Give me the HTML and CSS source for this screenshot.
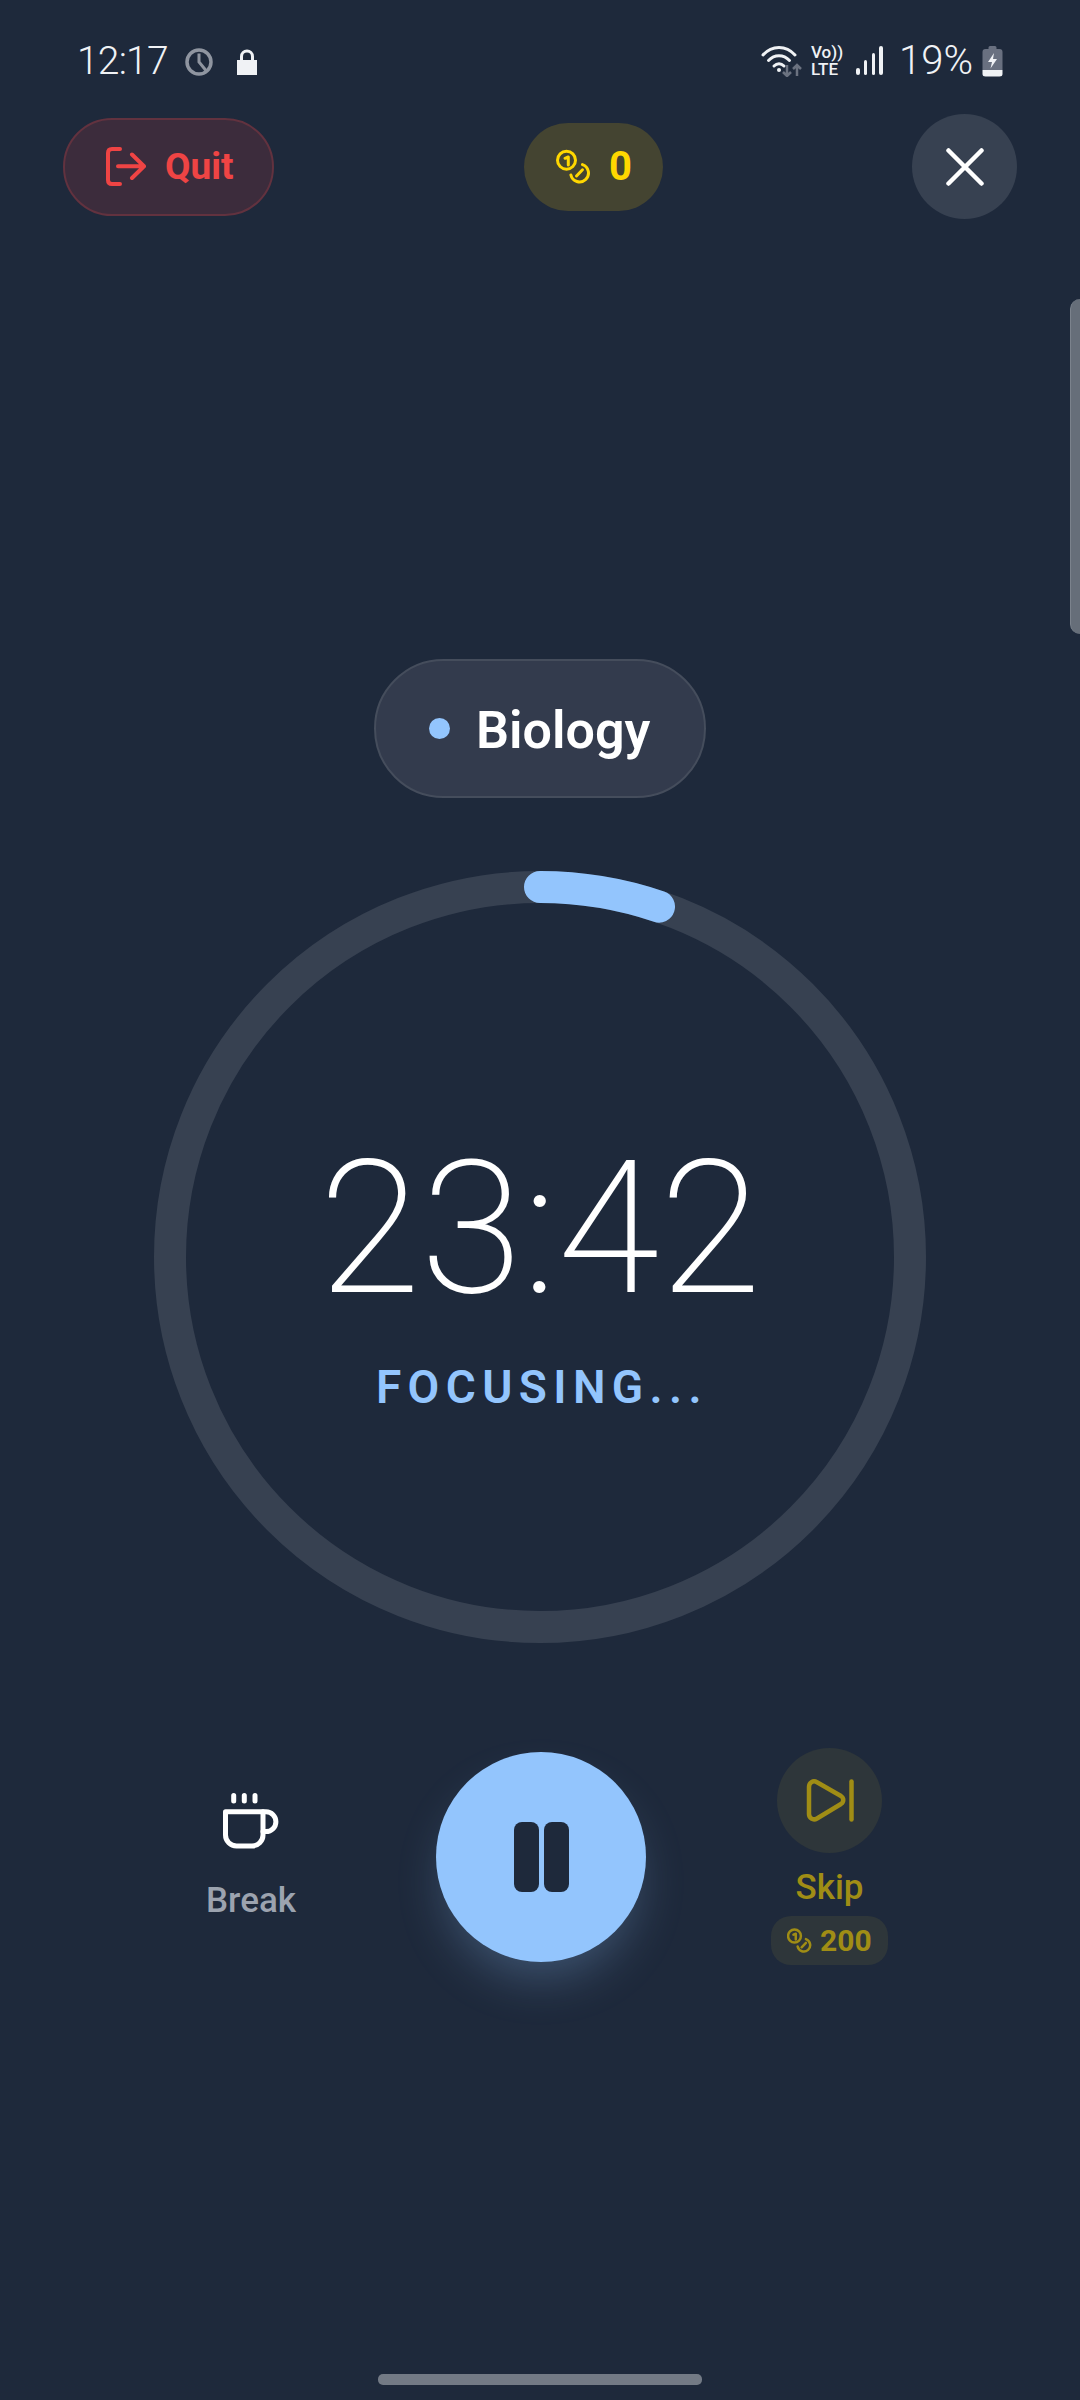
FILE: index.html
```html
<!DOCTYPE html>
<html lang="en">
<head>
<meta charset="utf-8">
<title>Focus timer</title>
<link rel="stylesheet" href="styles.css">
</head>
<body>
<div class="screen">
  <div class="status">
    <span class="clock">12:17</span>
    <svg class="alarm" viewBox="0 0 28 28"><circle cx="14" cy="14" r="12" /><path d="M14 5.5V14L21 22.5"/></svg>
    <svg class="lock" viewBox="0 0 22 26"><rect x="1" y="11" width="20" height="15"/><path d="M5.5 12V7.5a5.5 5.5 0 0 1 11 0V12"/></svg>
    <div class="status-right">
      <svg class="wifi" viewBox="0 0 42 32">
        <path class="w" d="M2 10C11 0 25 0 34 10"/>
        <path class="w" d="M7.5 15.5C13.5 9 22.5 9 28.5 15.5"/>
        <path class="w" d="M13 21C16 18 20 18 23 21"/>
        <circle class="wd" cx="18" cy="25" r="2"/>
        <path class="wa" d="M26 20V31M22 27L26 31L30 27"/>
        <path class="wa" d="M36 31V20M32 24L36 20L40 24"/>
      </svg>
      <div class="volte"><span class="vo">Vo))</span><span class="lte">LTE</span></div>
      <div class="signal"><i class="b1"></i><i class="b2"></i><i class="b3"></i><i class="b4"></i></div>
      <span class="batt-text">19%</span>
      <svg class="battery" viewBox="0 0 20 32"><path class="bb" d="M6 2.5Q6 1 7.5 1H12.5Q14 1 14 2.5V4H17Q20 4 20 7V25H0V7Q0 4 3 4H6Z"/><path class="bl" d="M0 25H20V29Q20 31.500 17 31.500H3Q0 31.500 0 29Z"/><path class="bl" d="M11.500 8L5.500 17H9.500L8 23.500L14.500 14H10.500Z"/></svg>
    </div>
  </div>

  <div class="header">
    <button class="quit">
      <svg class="quit-icon" viewBox="0 0 40 39"><path d="M14 2H6Q2 2 2 6V33Q2 37 6 37H14"/><path d="M12 19.300H38M26 7.500L38 19.300L26 31"/></svg>
      <span>Quit</span>
    </button>
    <div class="coins">
      <svg class="coin-icon" viewBox="0 0 35 35"><circle cx="10.500" cy="11.200" r="9"/><path d="M9 9.300L12.300 8V16"/><path d="M26.500 15.600A8.900 8.900 0 1 1 14.900 26"/><path d="M20.500 27L26.500 20.800"/></svg>
      <span>0</span>
    </div>
    <button class="close" aria-label="Close">
      <svg viewBox="0 0 38 38"><path d="M2.500 2.500L35.500 35.500M35.500 2.500L2.500 35.500"/></svg>
    </button>
  </div>

  <div class="subject"><span class="dot"></span><span class="subject-name">Biology</span></div>

  <div class="ring-wrap">
    <svg class="ring" viewBox="0 0 772 772">
      <circle class="track" cx="386" cy="386" r="370"/>
      <path class="arc" d="M386 16A370 370 0 0 1 505 35.600"/>
    </svg>
    <div class="time-block">
      <div class="time">23:42</div>
      <div class="state">FOCUSING...</div>
    </div>
  </div>

  <div class="controls">
    <div class="col col-break">
      <svg class="cup" viewBox="0 0 56 56"><path d="M10.700 2.500V8M21.300 2.500V8M32 2.500V8"/><path d="M2.500 18.800H40V42A11 11 0 0 1 29 53H13.500A11 11 0 0 1 2.500 42Z"/><path d="M40 18.800H43A9.900 9.900 0 0 1 43 38.600H40"/></svg>
      <span class="break-label">Break</span>
    </div>
    <button class="pause" aria-label="Pause"><i></i><i></i></button>
    <div class="col col-skip">
      <div class="skip-circle">
        <svg viewBox="0 0 48 43"><path d="M3 8C3 3.500 7 1 11 3.200L35 17C38 19 38 23 35 25L11 39.500C7 41.800 3 39 3 35Z"/><path d="M45.500 2.500V40.500"/></svg>
      </div>
      <span class="skip-label">Skip</span>
      <div class="cost">
        <svg class="cost-icon" viewBox="0 0 35 35"><circle cx="10.500" cy="11.200" r="9"/><path d="M9 9.300L12.300 8V16"/><path d="M26.500 15.600A8.900 8.900 0 1 1 14.900 26"/><path d="M20.500 27L26.500 20.800"/></svg>
        <span>200</span>
      </div>
    </div>
  </div>

  <div class="scrollbar"></div>
  <div class="home"></div>
</div>
</body>
</html>
```
FILE: styles.css
```css
* { box-sizing: border-box; }
html, body { margin: 0; padding: 0; }
body { background: #1e293b; font-family: Roboto, "Liberation Sans", sans-serif; }
button { border: 0; padding: 0; font: inherit; }
svg { display: block; fill: none; }

.screen { position: relative; width: 1080px; height: 2400px; overflow: hidden; background: #1e293b; display: flex; flex-direction: column; align-items: center; }

.status { width: 100%; height: 114px; padding: 41px 77px 0 77px; display: flex; align-items: flex-start; color: #f0f2f5; }
.clock { font-size: 39px; font-weight: 300; line-height: 40px; letter-spacing: -0.8px; width: 90px; white-space: nowrap; }
.alarm { width: 28px; height: 28px; margin: 7px 0 0 18px; }
.alarm circle { stroke: #8f95a0; stroke-width: 3.5; }
.alarm path { stroke: #8f95a0; stroke-width: 3; }
.lock { width: 22px; height: 26px; margin: 8px 0 0 23px; }
.lock rect { fill: #f0f2f5; }
.lock path { stroke: #f0f2f5; stroke-width: 3; }
.status-right { margin-left: auto; display: flex; align-items: flex-start; }
.wifi { width: 42px; height: 32px; margin-top: 4px; }
.w { stroke: #f0f2f5; stroke-width: 3; stroke-linecap: round; }
.wd { fill: #f0f2f5; }
.wa { stroke: #6b7280; stroke-width: 2.500; }
.volte { width: 31px; margin: 3px 0 0 8px; display: flex; flex-direction: column; color: #f0f2f5; font-weight: 500; }
.vo { font-size: 17px; line-height: 17px; white-space: nowrap; }
.lte { font-size: 17px; line-height: 17px; }
.signal { width: 27px; height: 29px; margin: 5px 0 0 14px; display: flex; align-items: flex-end; justify-content: space-between; }
.signal i { display: block; width: 3.500px; background: #f0f2f5; border-radius: 2px; }
.b1 { height: 7px; }
.b2 { height: 15px; }
.b3 { height: 22px; }
.b4 { height: 29px; }
.batt-text { margin-left: 16px; font-size: 40px; font-weight: 300; line-height: 40px; width: 83px; white-space: nowrap; }
.battery { width: 21px; height: 32px; margin-top: 4px; }
.bb { fill: #697080; }
.bl { fill: #f0f2f5; }

.header { width: 100%; height: 105px; display: flex; align-items: center; padding: 0 63px 0 63px; }
.quit { width: 211px; height: 98px; border-radius: 49px; background: #3c2c3c; border: 2px solid #62323f; color: #ef4444; display: flex; align-items: center; padding-left: 41px; font-size: 37px; font-weight: 700; }
.quit-icon { width: 40px; height: 39px; margin-right: 19px; }
.quit-icon path { stroke: #ef4444; stroke-width: 4; stroke-linecap: round; stroke-linejoin: round; }
.coins { margin-left: 250px; width: 139px; height: 88px; border-radius: 44px; background: #444431; color: #ffd700; display: flex; align-items: center; padding-left: 32px; font-size: 40px; font-weight: 700; }
.coin-icon { width: 35px; height: 35px; margin-right: 18px; }
.coin-icon circle, .coin-icon path { stroke: #ffd700; stroke-width: 3; stroke-linecap: round; stroke-linejoin: round; }
.close { margin-left: auto; width: 105px; height: 105px; border-radius: 50%; background: #374151; display: flex; align-items: center; justify-content: center; }
.close svg { width: 38px; height: 38px; }
.close path { stroke: #fff; stroke-width: 4.500; stroke-linecap: round; }

.subject { margin-top: 440px; width: 332px; height: 139px; border-radius: 70px; background: #333b4d; border: 2px solid #454d5c; display: flex; align-items: center; padding-left: 53px; color: #fff; }
.dot { width: 21px; height: 21px; border-radius: 50%; background: #93c5fd; margin-right: 26px; }
.subject-name { font-size: 52px; font-weight: 600; padding-top: 3px; }

.ring-wrap { margin-top: 73px; width: 772px; height: 772px; position: relative; display: flex; align-items: center; justify-content: center; }
.ring { position: absolute; inset: 0; width: 772px; height: 772px; }
.track { stroke: #374151; stroke-width: 32; }
.arc { stroke: #93c5fd; stroke-width: 32; stroke-linecap: round; }
.time-block { padding-top: 28px; display: flex; flex-direction: column; align-items: center; }
.time { font-size: 185px; font-weight: 200; line-height: 200px; color: #fff; white-space: nowrap; }
.state { margin-top: 31px; padding-left: 4px; font-size: 46px; font-weight: 600; line-height: 54px; letter-spacing: 6.400px; color: #93c5fd; white-space: nowrap; }

.controls { margin-top: 105px; margin-left: 2px; display: flex; gap: 80px; align-items: flex-start; }
.col { width: 210px; display: flex; flex-direction: column; align-items: center; }
.col-break { padding-top: 45px; }
.cup { width: 56px; height: 56px; }
.cup path { stroke: #fff; stroke-width: 5; stroke-linecap: round; stroke-linejoin: round; }
.break-label { margin-top: 30px; font-size: 35px; font-weight: 500; line-height: 44px; color: #9ca3af; }
.pause { margin-top: 4px; width: 210px; height: 210px; border-radius: 50%; background: #93c5fd; display: flex; align-items: center; justify-content: center; gap: 5px; box-shadow: 0 25px 50px -12px rgba(147, 197, 253, 0.3); }
.pause i { display: block; width: 25px; height: 70px; border-radius: 8px; background: #1e293b; }
.col-skip { padding-right: 3px; }
.skip-circle { width: 105px; height: 105px; border-radius: 50%; background: #2e363a; display: flex; align-items: center; justify-content: center; }
.skip-circle svg { width: 48px; height: 43px; }
.skip-circle path { stroke: #a08d15; stroke-width: 4.500; stroke-linecap: round; stroke-linejoin: round; }
.skip-label { margin-top: 13px; font-size: 35px; font-weight: 500; line-height: 44px; color: #a08d15; }
.cost { margin-top: 6px; width: 117px; height: 49px; border-radius: 20px; background: #2e363a; display: flex; align-items: center; padding-left: 16px; color: #a08d15; font-size: 30px; font-weight: 700; }
.cost-icon { width: 25px; height: 25px; margin-right: 8px; }
.cost-icon circle, .cost-icon path { stroke: #a08d15; stroke-width: 3.500; stroke-linecap: round; stroke-linejoin: round; }

.scrollbar { position: absolute; right: 0; top: 299px; width: 10px; height: 335px; background: #666e79; border-left: 1px solid #7b828c; border-radius: 10px 0 0 10px; }
.home { position: absolute; left: 378px; top: 2374px; width: 324px; height: 11px; border-radius: 5px; background: #737a85; }
```
